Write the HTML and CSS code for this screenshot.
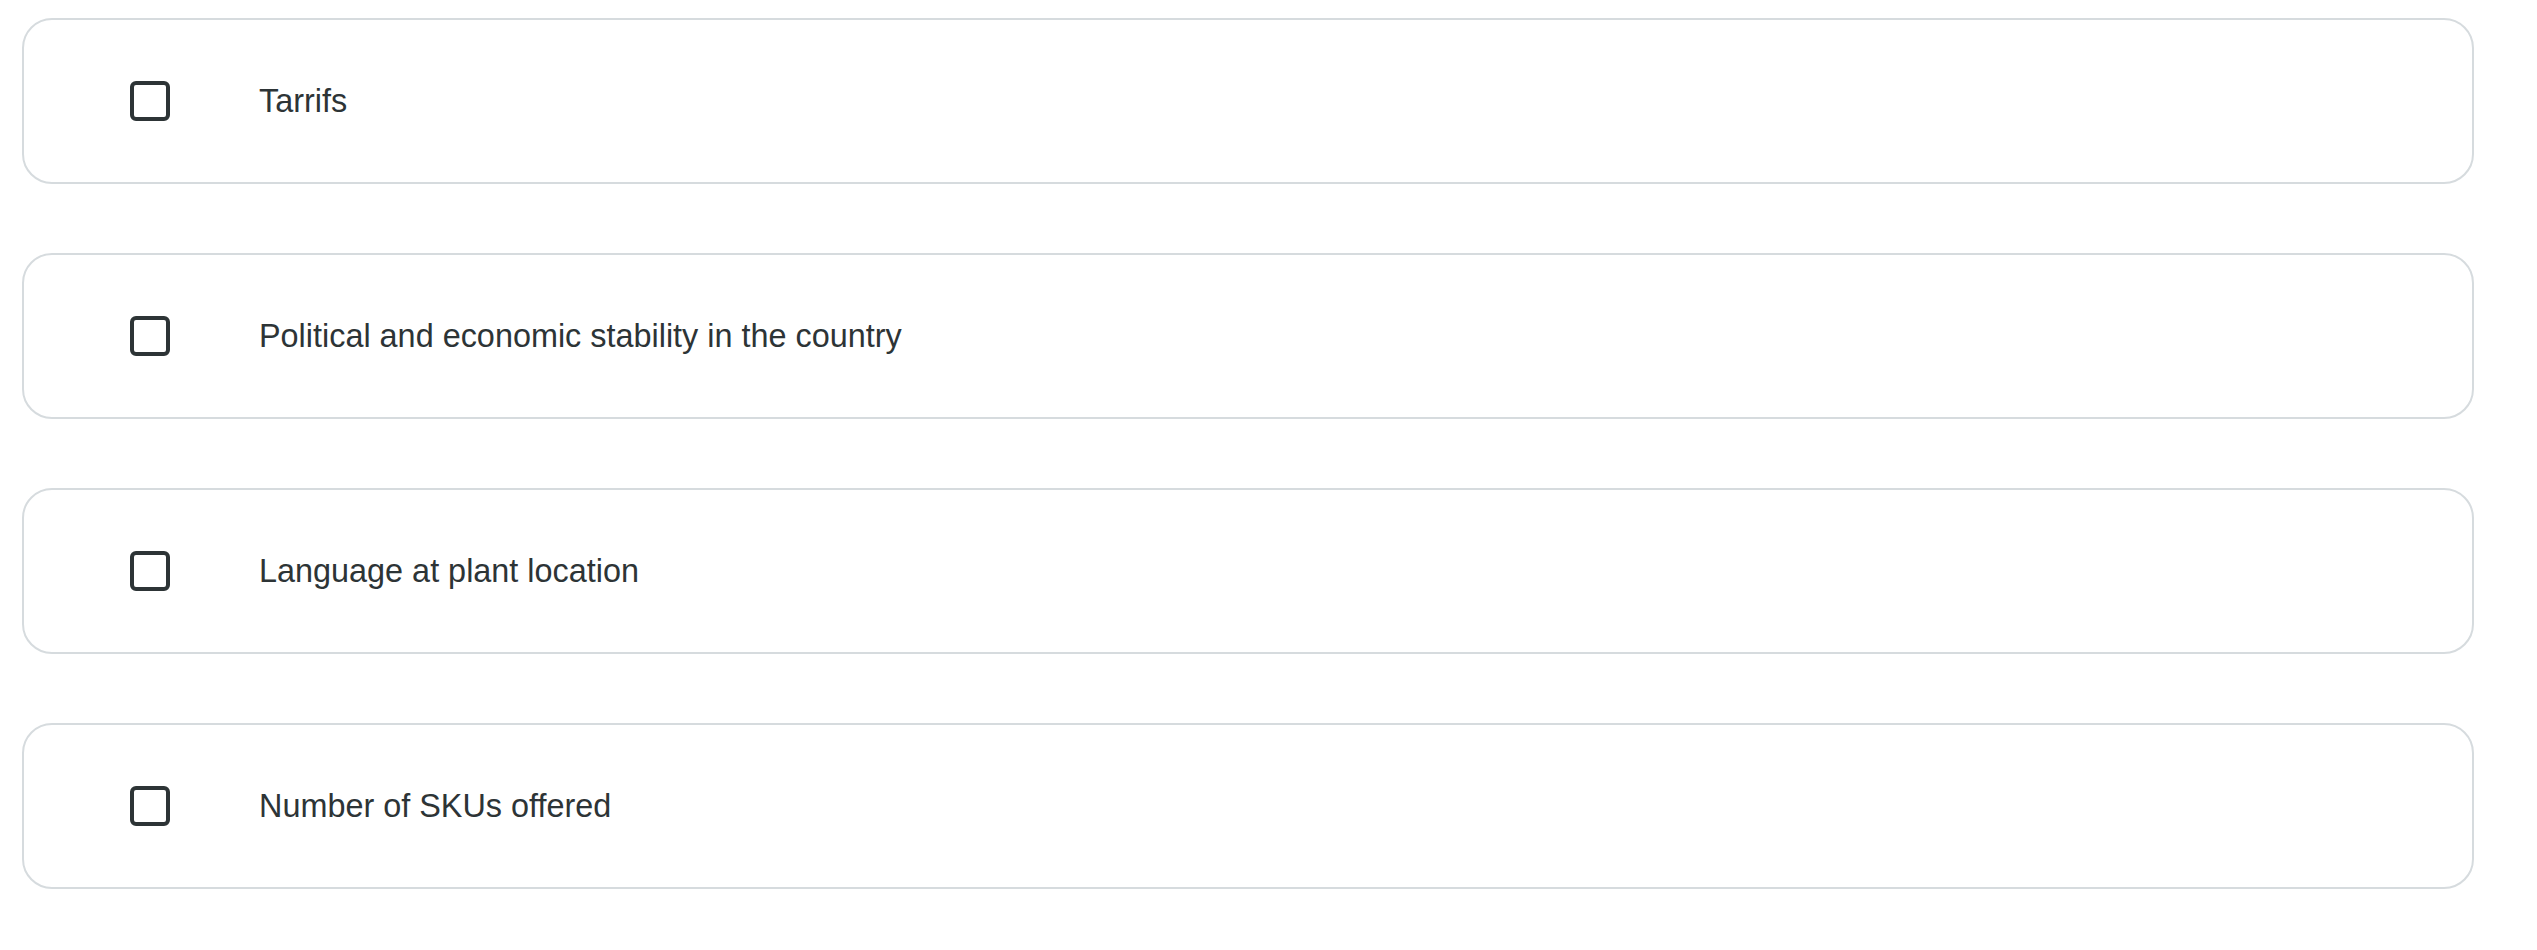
FILE: index.html
```html
<!DOCTYPE html>
<html lang="en">
<head>
<meta charset="utf-8">
<title>Options</title>
<link rel="stylesheet" href="styles.css">
</head>
<body>
<div class="list">
  <label class="card">
    <span class="box"></span>
    <span class="label">Tarrifs</span>
  </label>
  <label class="card">
    <span class="box"></span>
    <span class="label">Political and economic stability in the country</span>
  </label>
  <label class="card">
    <span class="box"></span>
    <span class="label">Language at plant location</span>
  </label>
  <label class="card">
    <span class="box"></span>
    <span class="label">Number of SKUs offered</span>
  </label>
</div>
</body>
</html>
```
FILE: styles.css
```css
html, body {
  margin: 0;
  padding: 0;
  background: #ffffff;
}
body {
  font-family: "Liberation Sans", Arial, sans-serif;
  color: #2d3436;
}
.list {
  display: flex;
  flex-direction: column;
  gap: 69px;
  padding: 18px 0 0 22px;
  width: 2452px;
}
.card {
  display: flex;
  align-items: center;
  box-sizing: border-box;
  height: 166px;
  border: 2px solid #d6dbde;
  border-radius: 30px;
  padding-left: 106px;
  gap: 89px;
  background: #fff;
}
.box {
  flex: none;
  box-sizing: border-box;
  width: 40px;
  height: 40px;
  border: 4px solid #2d3436;
  border-radius: 6px;
}
.label {
  font-size: 32.4px;
  line-height: 1;
  color: #2d3436;
}
```
